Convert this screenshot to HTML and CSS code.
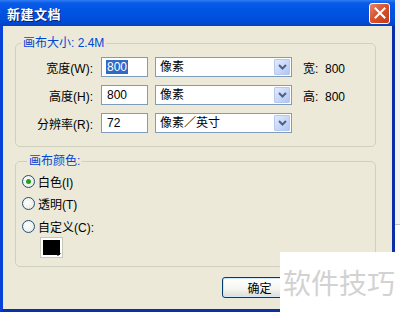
FILE: index.html
```html
<!DOCTYPE html>
<html lang="zh">
<head>
<meta charset="utf-8">
<link rel="stylesheet" href="styles.css">
</head>
<body>
<div class="page">
  <div class="window">
    <div class="titlebar">
      <span class="title">新建文档</span>
      <span class="close"><svg width="12" height="12" viewBox="0 0 12 12"><path d="M1.5 1.5L10.5 10.5M10.5 1.5L1.5 10.5" stroke="#fff" stroke-width="2" stroke-linecap="square"/></svg></span>
    </div>
    <div class="content">
      <fieldset class="group size-group">
        <legend>画布大小: 2.4M</legend>
        <div class="row">
          <span class="label">宽度(W):</span>
          <span class="input"><span class="sel">800</span></span>
          <span class="select"><span class="val">像素</span><span class="arrow"><svg width="9" height="6" viewBox="0 0 9 6"><path d="M1 1L4.5 4.5L8 1" fill="none" stroke="#4d6185" stroke-width="2"/></svg></span></span>
          <span class="info">宽:&nbsp; 800</span>
        </div>
        <div class="row">
          <span class="label">高度(H):</span>
          <span class="input">800</span>
          <span class="select"><span class="val">像素</span><span class="arrow"><svg width="9" height="6" viewBox="0 0 9 6"><path d="M1 1L4.5 4.5L8 1" fill="none" stroke="#4d6185" stroke-width="2"/></svg></span></span>
          <span class="info">高:&nbsp; 800</span>
        </div>
        <div class="row">
          <span class="label">分辨率(R):</span>
          <span class="input">72</span>
          <span class="select"><span class="val">像素／英寸</span><span class="arrow"><svg width="9" height="6" viewBox="0 0 9 6"><path d="M1 1L4.5 4.5L8 1" fill="none" stroke="#4d6185" stroke-width="2"/></svg></span></span>
        </div>
      </fieldset>
      <fieldset class="group color-group">
        <legend>画布颜色:</legend>
        <div class="radio-row"><span class="radio on"></span><span>白色(I)</span></div>
        <div class="radio-row"><span class="radio"></span><span>透明(T)</span></div>
        <div class="radio-row"><span class="radio"></span><span>自定义(C):</span></div>
        <div class="swatch"><span class="swatch-inner"></span><span class="swatch-tri"></span></div>
      </fieldset>
      <div class="buttons">
        <span class="button">确定</span>
      </div>
    </div>
  </div>
  <div class="outside"><div class="outside-top"></div></div>
</div>
<div class="watermark">软件技巧</div>
</body>
</html>
```

FILE: styles.css
```css
* { box-sizing: border-box; }
html, body { margin: 0; padding: 0; background: #fff; }
body {
  width: 400px; height: 312px; overflow: hidden; position: relative;
  font-family: "Liberation Sans", "Noto Sans CJK SC", sans-serif;
  font-size: 12px; color: #000;
}
.page { display: flex; width: 400px; height: 312px; }
.window {
  width: 395px; height: 312px;
  display: flex; flex-direction: column;
  border-left: 3px solid #0842d8;
  border-right: 3px solid #0a2fa8;
  border-bottom: 3px solid #0a2fa8;
  background: #ece9d8;
}
.titlebar {
  height: 26px; flex: none;
  margin-left: -3px; margin-right: -3px;
  background: linear-gradient(#2f7cf6 0%, #0a5ae8 12%, #0054e3 40%, #0050dc 70%, #0148d0 90%, #0a3fb8 100%);
  display: flex; align-items: center; justify-content: space-between;
  padding: 0 5px 0 7px;
}
.title {
  color: #fff; font-weight: bold; font-size: 13px;
  font-family: "Noto Sans CJK SC", sans-serif;
  text-shadow: 1px 1px 0 #0a1e6e;
  letter-spacing: 0.5px;
}
.close {
  width: 21px; height: 21px;
  border: 1px solid #fff; border-radius: 3px;
  background: linear-gradient(135deg, #e8856a 0%, #d9532c 45%, #c33a16 100%);
  display: flex; align-items: center; justify-content: center;
}
.content { flex: 1; padding: 10px 16px 0 12px; display: flex; flex-direction: column; }
.group {
  margin: 0; border: 1px solid #d0d0bf; border-radius: 5px;
  padding: 0 0 0 0;
}
.group legend {
  color: #0046d5; padding: 0 2px; margin-left: 5px;
  line-height: 14px; font-size: 12px;
}
.size-group { padding: 7px 0 13px 0; display: flex; flex-direction: column; gap: 8px; height: 111px; }
.row { display: flex; align-items: center; height: 20px; }
.label { width: 77px; text-align: right; margin-right: 8px; }
.input {
  width: 47px; height: 20px; border: 1px solid #7f9db9; background: #fff;
  padding: 0 0 0 5px; line-height: 18px; margin-right: 7px;
}
.sel { background: #316ac5; color: #fff; padding: 0 1px; margin-left: -1px; }
.select {
  width: 137px; height: 20px; border: 1px solid #7f9db9; background: #fff;
  display: flex; align-items: center; justify-content: space-between;
  padding: 1px 1px 1px 4px; margin-right: 11px;
}
.val { line-height: 16px; }
.arrow {
  width: 16px; height: 16px; border: 1px solid #b5c8f1; border-radius: 1px;
  background: linear-gradient(135deg, #e2ebfd 0%, #c4d5f8 60%, #b0c5f4 100%);
  display: flex; align-items: center; justify-content: center;
}
.info { white-space: nowrap; }
.color-group {
  margin-top: 7px; height: 113px;
  padding: 2px 0 0 6px; display: flex; flex-direction: column;
}
.radio-row { display: flex; align-items: center; height: 22.5px; gap: 3px; }
.radio {
  width: 13px; height: 13px; border-radius: 50%;
  border: 1px solid #1c5180;
  background: radial-gradient(circle at 40% 40%, #fff 0%, #f0efe7 60%, #dcdacb 100%);
  position: relative;
}
.radio.on::after {
  content: ""; position: absolute; left: 3px; top: 3px; width: 5px; height: 5px;
  border-radius: 50%; background: #21a121;
}
.swatch {
  margin: -1px 0 0 18px; width: 23px; height: 21px;
  background: #fff; border: 1px solid #c9c7ba; padding: 2px;
  position: relative;
}
.swatch-inner { display: block; width: 17px; height: 15px; background: #000; }
.swatch-tri {
  position: absolute; right: 1px; bottom: 1px;
  border-left: 3px solid transparent; border-right: 3px solid transparent;
  border-top: 3px solid #000;
}
.buttons { display: flex; padding: 10px 0 0 207px; }
.button {
  width: 75px; height: 21px; border: 1px solid #003c74; border-radius: 3px;
  background: linear-gradient(#ffffff 0%, #f4f4f0 60%, #dcdcd4 100%);
  display: flex; align-items: center; justify-content: center;
  font-family: "Noto Sans CJK SC", sans-serif; font-size: 12px;
  box-shadow: inset 0 0 0 1px #cee7ff;
}
.outside { flex: 1; background: #fff; }
.outside-top { height: 225px; border-bottom: 1px solid #c8c8c8; background: #f4f4f4; }
.watermark {
  position: absolute; left: 280px; top: 252px; width: 120px; height: 60px;
  background: #fff; color: #d2d2d2;
  font-family: "Noto Sans CJK SC", sans-serif; font-size: 28px;
  display: flex; align-items: center; padding-left: 3px;
}
```
